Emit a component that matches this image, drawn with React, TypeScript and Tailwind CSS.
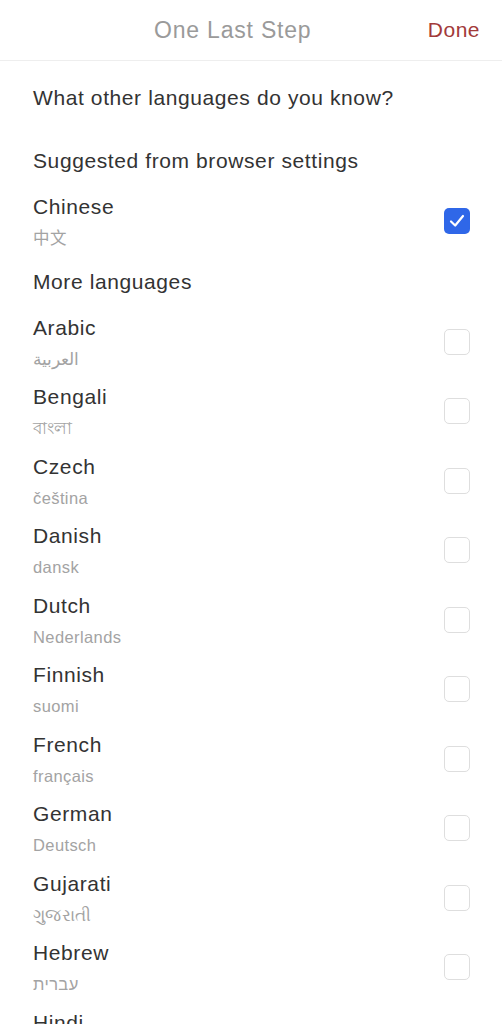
import React from "react";

const langs: [string, string][] = [
  ["Arabic", "العربية"],
  ["Bengali", "বাংলা"],
  ["Czech", "čeština"],
  ["Danish", "dansk"],
  ["Dutch", "Nederlands"],
  ["Finnish", "suomi"],
  ["French", "français"],
  ["German", "Deutsch"],
  ["Gujarati", "ગુજરાતી"],
  ["Hebrew", "עברית"],
  ["Hindi", "हिन्दी"],
];

function Check({ checked }: { checked?: boolean }) {
  if (checked) {
    return (
      <div className="mt-[21px] mr-[32px] flex h-[26px] w-[26px] shrink-0 items-center justify-center rounded-[5px] bg-[#2f67e8]">
        <svg width="20" height="20" viewBox="0 0 20 20" fill="none">
          <path d="M4 10.5 L8.2 14.5 L16 5" stroke="#fff" strokeWidth="2.2" strokeLinecap="round" strokeLinejoin="round" />
        </svg>
      </div>
    );
  }
  return <div className="mt-[21px] mr-[32px] h-[26px] w-[26px] shrink-0 rounded-[5px] border-[1.5px] border-[#dedede] bg-white" />;
}

function Row({ name, native, checked }: { name: string; native: string; checked?: boolean }) {
  return (
    <div className="flex h-[69.5px] items-start justify-between pl-[33px]">
      <div className="flex flex-col">
        <div className="h-[40px] text-[21px] leading-[40px] tracking-[0.6px] text-[#333]">{name}</div>
        <div
          className="h-[22px] text-[16.5px] leading-[22px] tracking-[0.4px] text-[#a3a3a3]"
          style={{ fontFamily: '"Liberation Sans", "Noto Sans", "Noto Sans CJK SC", sans-serif' }}
        >
          {native}
        </div>
      </div>
      <Check checked={checked} />
    </div>
  );
}

export default function App() {
  return (
    <div
      className="h-[1024px] w-[502px] overflow-hidden bg-white"
      style={{ fontFamily: '"Liberation Sans", Arial, "Noto Sans CJK SC", sans-serif' }}
    >
      <div className="flex h-[61px] items-center border-b border-[#eeeeee]">
        <div className="ml-[154px] text-[23px] tracking-[0.8px] text-[#9a9a9a]">One Last Step</div>
        <div className="ml-auto mr-[22px] text-[21px] tracking-[0.5px] text-[#a23a3a]">Done</div>
      </div>
      <div className="flex h-[74px] items-center pl-[33px] text-[21px] tracking-[0.6px] text-[#333]">What other languages do you know?</div>
      <div className="flex h-[52px] items-center pl-[33px] text-[21px] tracking-[0.6px] text-[#333]">Suggested from browser settings</div>
      <Row name="Chinese" native="中文" checked />
      <div className="flex h-[51px] items-center pl-[33px] text-[21px] tracking-[0.6px] text-[#333]">More languages</div>
      {langs.map(([n, nat]) => (
        <Row key={n} name={n} native={nat} />
      ))}
    </div>
  );
}
